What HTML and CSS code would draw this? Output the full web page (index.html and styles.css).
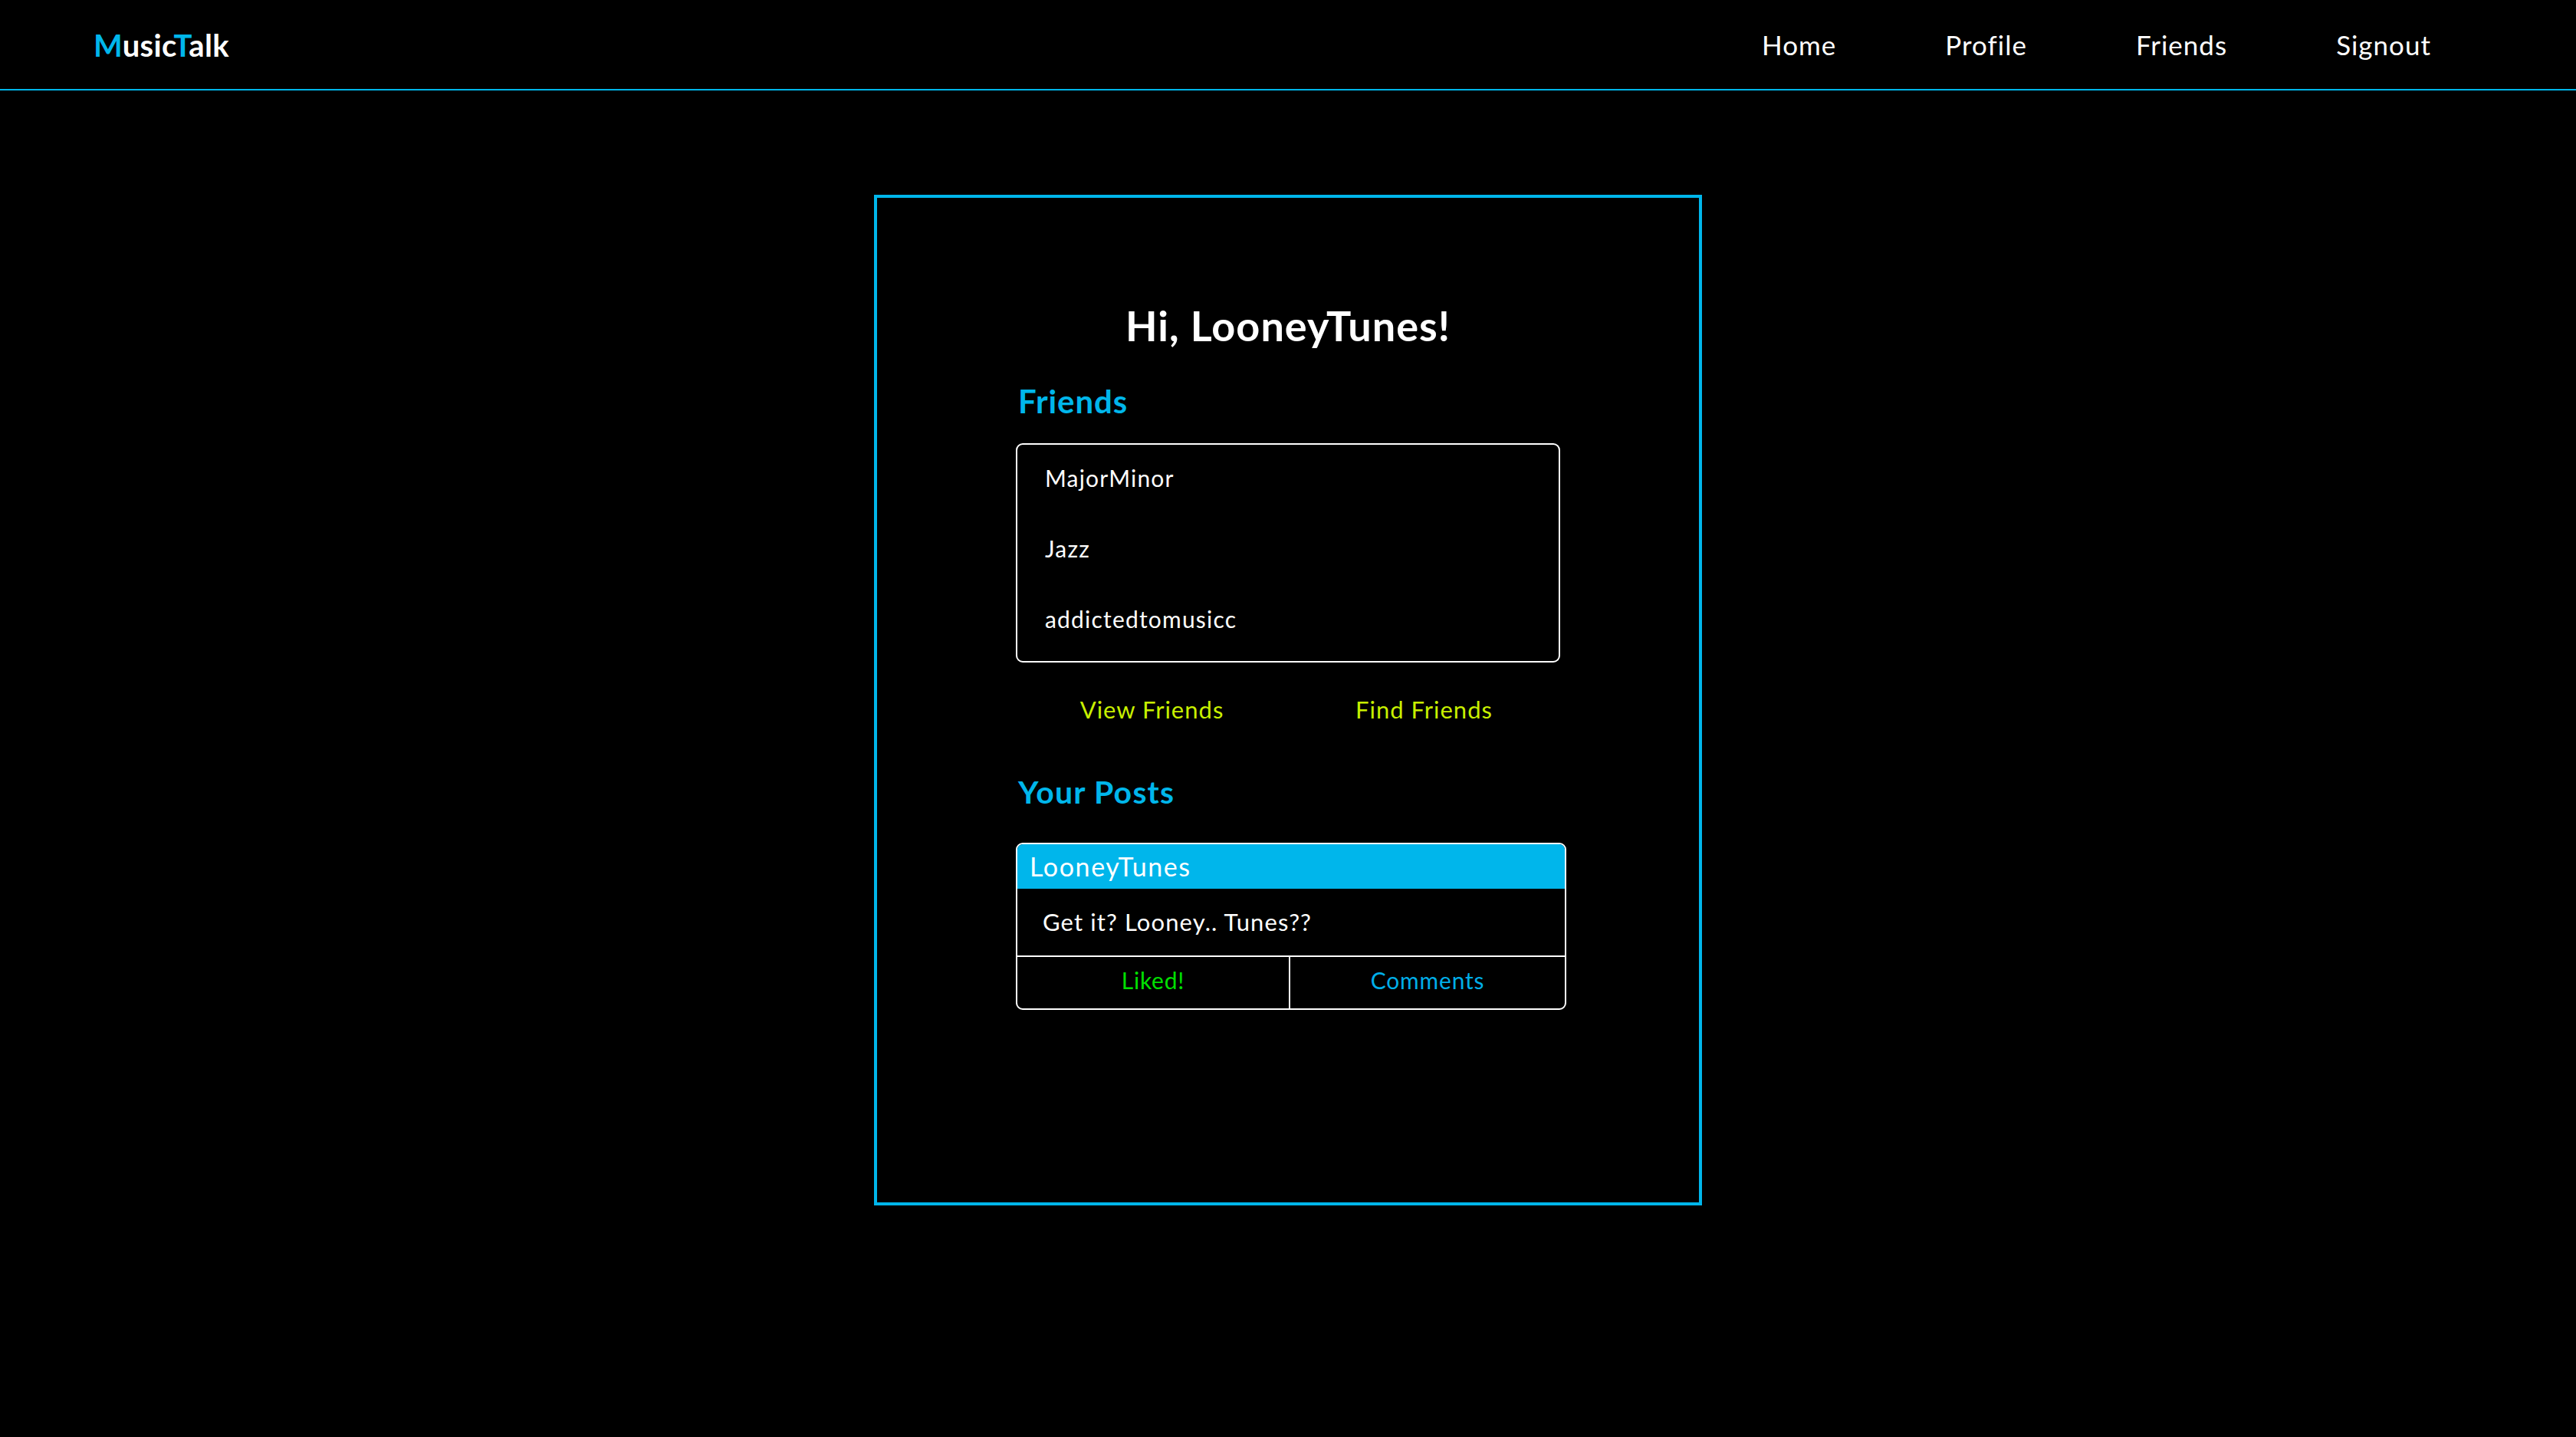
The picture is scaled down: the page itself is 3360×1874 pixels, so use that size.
FILE: index.html
```html
<!DOCTYPE html>
<html lang="en">
<head>
<meta charset="utf-8">
<title>MusicTalk</title>
<link rel="stylesheet" href="styles.css">
</head>
<body>
<header class="topbar">
  <div class="logo"><span class="accent">M</span>usic<span class="accent">T</span>alk</div>
  <nav class="nav">
    <a class="nav-link" href="#">Home</a>
    <a class="nav-link" href="#">Profile</a>
    <a class="nav-link" href="#">Friends</a>
    <a class="nav-link" href="#">Signout</a>
  </nav>
</header>
<main class="main">
  <section class="card">
    <h1 class="greeting">Hi, LooneyTunes!</h1>
    <div class="column">
      <h2 class="section-title">Friends</h2>
      <ul class="friend-list">
        <li class="friend">MajorMinor</li>
        <li class="friend">Jazz</li>
        <li class="friend">addictedtomusicc</li>
      </ul>
      <div class="friend-actions">
        <a class="action-link" href="#">View Friends</a>
        <a class="action-link" href="#">Find Friends</a>
      </div>
      <h2 class="section-title posts-title">Your Posts</h2>
      <article class="post">
        <div class="post-head">LooneyTunes</div>
        <div class="post-body">Get it? Looney.. Tunes??</div>
        <div class="post-foot">
          <span class="post-btn liked">Liked!</span>
          <span class="post-btn comments">Comments</span>
        </div>
      </article>
    </div>
  </section>
</main>
</body>
</html>
```
FILE: styles.css
```css
* { box-sizing: border-box; }
html, body { margin: 0; padding: 0; }
body {
  background: #000;
  color: #fff;
  font-family: "Lato", "Noto Sans", "Liberation Sans", sans-serif;
  min-height: 1874px;
}
.accent { color: #00b6eb; }

.topbar {
  height: 118px;
  border-bottom: 2px solid #00b6eb;
  display: flex;
  align-items: center;
  justify-content: space-between;
  padding: 0 189px 0 122px;
}
.logo {
  font-size: 40px;
  font-weight: 700;
  line-height: 50px;
  letter-spacing: 0.3px;
  color: #fff;
  margin-top: 2px;
}
.nav {
  display: flex;
  gap: 142px;
}
.nav-link {
  color: #fff;
  text-decoration: none;
  font-size: 35px;
  font-weight: 400;
  letter-spacing: 1px;
  line-height: 44px;
}

.main {
  padding-top: 136px;
}
.card {
  width: 1080px;
  height: 1318px;
  margin: 0 auto;
  border: 4px solid #00b6eb;
  padding-top: 137px;
}
.greeting {
  margin: 0;
  text-align: center;
  font-size: 54px;
  line-height: 60px;
  font-weight: 700;
  letter-spacing: 1px;
}
.column {
  margin-left: 181px;
  width: 718px;
}
.section-title {
  margin: 43px 0 0;
  padding-left: 3px;
  color: #00b6eb;
  font-size: 42px;
  line-height: 50px;
  font-weight: 700;
  letter-spacing: 0.9px;
}
.friend-list {
  list-style: none;
  margin: 30px 0 0;
  padding: 0 0 6px 36px;
  width: 710px;
  border: 2px solid #fff;
  border-radius: 9px;
}
.friend {
  font-size: 30px;
  line-height: 86px;
  padding-bottom: 6px;
  letter-spacing: 1.2px;
}
.friend-actions {
  width: 710px;
  margin-top: 41px;
  display: grid;
  grid-template-columns: 1fr 1fr;
}
.action-link {
  text-align: center;
  color: #c8f000;
  text-decoration: none;
  font-size: 31px;
  line-height: 40px;
  letter-spacing: 1px;
}
.posts-title {
  margin-top: 63px;
  font-size: 41px;
  letter-spacing: 1.2px;
}
.post {
  margin-top: 41px;
  width: 718px;
  border: 2px solid #fff;
  border-radius: 9px;
  overflow: hidden;
}
.post-head {
  background: #00b6eb;
  font-size: 34px;
  line-height: 58px;
  padding-left: 16px;
  font-weight: 400;
  letter-spacing: 1.6px;
}
.post-body {
  font-size: 31px;
  line-height: 87px;
  padding-left: 33px;
  letter-spacing: 1.1px;
  border-bottom: 2px solid #fff;
}
.post-foot {
  display: grid;
  grid-template-columns: 356px 1fr;
}
.post-btn {
  text-align: center;
  font-size: 30px;
  line-height: 60px;
  padding-bottom: 7px;
  letter-spacing: 0.8px;
}
.liked {
  color: #00e000;
  border-right: 2px solid #fff;
}
.comments {
  color: #00aee8;
}
```
